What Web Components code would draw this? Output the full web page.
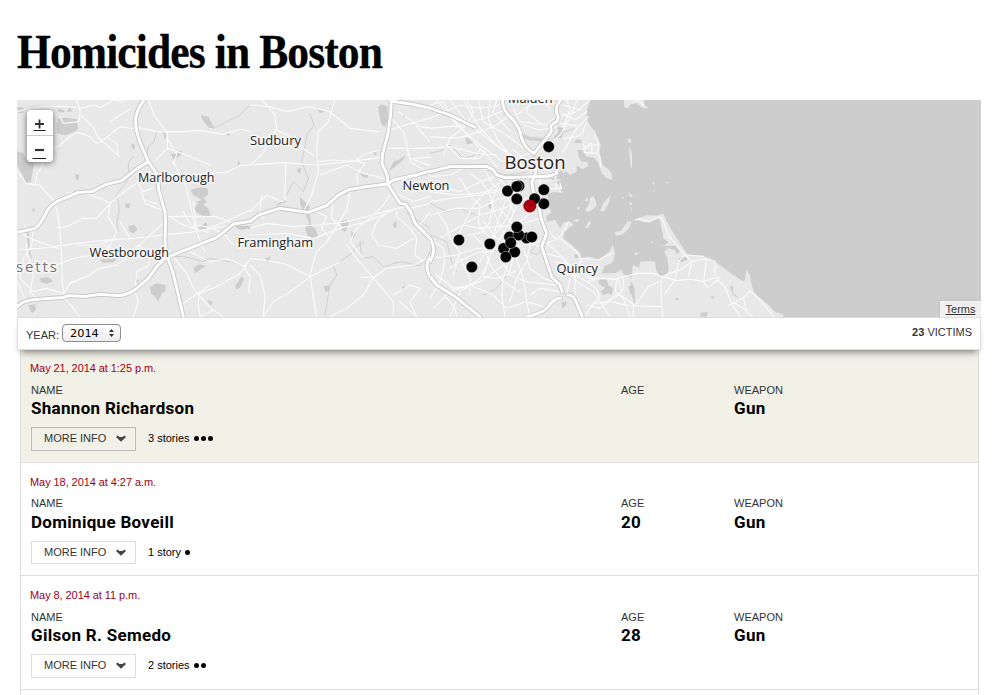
<!DOCTYPE html>
<html lang="en">
<head>
<meta charset="utf-8">
<title>Homicides in Boston</title>
<style>
body{margin:0;background:#fff;color:#333;font-family:"Liberation Sans",Arial,sans-serif;font-size:11px;overflow:hidden}
</style>
</head>
<body>
<homicide-page></homicide-page>
<script>
const define=(name,html,after)=>{
  const t=document.createElement('template');t.innerHTML=html;
  customElements.define(name,class extends HTMLElement{
    constructor(){super();this.attachShadow({mode:'open'}).append(t.content.cloneNode(true));}
    connectedCallback(){if(after)after(this.shadowRoot,this);}
  });
};

/* Map: each group is drawn in tile units, three to a pixel */
const west={water:[
 'M145,70L165,68 200,72 205,102 190,112 165,121 140,115 140,85Z','M21,168L40,175 50,195 72,205 68,230 62,262 48,264 38,240 21,212Z',
 'M542,284L572,276 592,280 595,298 580,310 592,320 580,328 596,342 602,362 588,368 560,352 550,338 566,326 556,320 574,316 562,306 550,300Z',
 'M483,176L500,176 515,164 512,182 490,194Z','M366,144L374,150 374,165 364,156Z','M355,394L372,388 382,402 372,415 358,410Z',
 'M420,575L440,565 466,570 468,585 455,596 445,620 436,605 424,598Z','M90,550L115,546 130,558 110,566 92,562Z','M270,495L300,486 320,492 310,502 280,504Z',
 'M550,518L570,508 588,513 572,523 555,535Z','M695,543L702,552 690,578 678,583 676,572Z','M196,238L208,240 204,258 197,252Z','M55,630L76,628 78,645 66,655Z',
 'M674,392L700,387 735,393 738,412 715,401 690,405Z','M565,400L590,380 592,400 570,407Z','M374,552L386,555 384,567Z','M180,35L187,48 170,52Z','M143,40L160,44 165,52 145,52Z',
 'M46,410L56,412 60,470 68,495 58,480 52,440Z','M346,326L360,324 358,340 346,337Z','M65,345L76,338 72,352Z','M590,614L608,620 602,632Z','M684,195L692,207 683,211Z','M572,60L595,66 614,100 596,98 576,72Z','M21,37L40,37 42,52 26,56Z','M648,116L662,110 656,125Z','M458,105L470,120 464,135Z'],
creek:['M370,185Q350,200 356,225T335,280T325,315L328,350 320,380 325,410','M440,110L432,140 415,155 410,185','M586,65L610,100 640,85 690,60 720,30','M480,485L520,484 580,500 600,490 660,500 700,510'],
minor:['M21,50L60,40 110,35 170,34 200,38','M200,15L210,45 208,80 160,85 150,65M213,62L250,97 265,130M213,40L250,30 270,38 310,15M300,80L360,42M310,15L335,20 350,15',
 'M180,125L205,112 240,125 260,147 290,127 330,95 375,102M180,125L150,150 110,170 100,205 80,240 75,270 50,265','M21,225L48,265 90,270 115,300 135,320',
 'M260,122L295,155 328,185M290,127L320,145 324,182','M385,98L440,110 520,110 570,106 640,118 690,102 750,115','M415,15L432,60 472,115 472,160 435,197M472,130L500,178 490,206M490,200L530,280 555,395 575,450 585,470',
 'M472,160L530,180 600,210M580,235L650,232 690,212 750,208','M384,262L330,300 300,325 295,365 320,410 300,450 285,470','M300,325L270,310 230,296 170,292M300,325L260,370 220,370 170,395 140,398',
 'M135,320L147,380 154,460 157,560 162,600','M21,465L90,460 200,445 270,437 370,430 460,420 540,412 620,398 680,390 750,390','M21,405L60,430 100,445 145,460M45,390L50,470 70,540 60,590 80,610M70,400L65,450 40,490 30,550 70,590',
 'M475,365L540,364 620,365 670,385M550,320L560,400M340,490L390,448 430,410 466,380','M280,450L340,475 380,465M162,595L180,565 230,545 270,520 320,510 350,490',
 'M383,450L415,470 420,510 380,530 375,590 385,620 370,665','M490,485L530,535 550,580 565,600 610,645 640,665M610,645L570,665 565,625 570,590',
 'M540,470L600,500 650,492 700,512 715,500 740,478M700,512L720,545 715,590 750,620','M555,600L620,575 690,535 710,510M520,625L600,570','M21,560L35,590 45,610M21,530L60,505 110,530 140,525M70,590L110,580 160,595',
 'M165,610L185,635 210,665M395,290L405,325 455,345M405,315L420,320 440,325M384,265L400,290 430,280M560,390L600,398 640,415 670,450 700,445','M480,365L510,385 550,400 595,412M520,350L540,385 555,400','M600,398L650,378 700,355 750,335','M140,510L190,490 250,480M200,450L260,450 320,430M330,380L360,430'],
major:['M402,15Q378,45 376,80C378,120 395,155 415,200L443,240 446,285 465,350 467,380 465,440 472,485 488,530 505,600 520,665','M21,412L75,400Q90,390 105,360Q115,335 140,320L205,292 245,290 290,268 335,257 375,225 413,201','M21,635Q40,615 80,613L160,607 175,602 225,604 270,598 325,602Q355,600 380,580L415,550 440,515 466,490 500,475 620,428 670,387 715,380 750,362']};
const mid={water:['M385,35L395,28 412,35 415,75 405,95 395,90 388,60Z','M142,222L152,218 152,234 142,232Z','M150,306L166,322 180,335 178,350 185,395 195,400 205,425 190,432 172,420 165,400 178,385 165,355 150,328Z','M270,380L290,374 296,385 286,410 276,405Z','M304,408L318,420 304,432Z','M222,573L238,572 238,587 225,590Z','M195,37L225,50 210,54Z','M330,234L355,240 352,250 335,244Z','M645,128L675,128 665,145 652,148Z','M468,180L455,200 430,218 416,230 430,200 445,195Z','M47,490L63,485 52,505Z','M455,575L467,572 460,588Z','M75,335L100,312 108,320Z','M368,172L380,172 378,182Z','M456,60L466,57 462,70Z','M430,385L440,377 438,400 430,395Z'],
creek:['M180,55L192,90 170,120 165,155 155,200 175,250 160,290 130,260 110,300','M330,440L335,490 370,485 400,515 450,500 510,512 530,488','M470,355L510,380 540,400 550,440 605,445 600,500 610,530','M570,500L605,525','M340,440L320,455 300,480 250,510 260,540 240,570 225,660'],
minor:['M0,30L60,35 110,50 175,35 240,50 300,100 385,110','M35,15L50,30 75,60 80,100 35,180 0,210','M255,15L235,80 205,110 200,165 205,230 185,300 160,350','M0,210L100,203 200,210 300,200 390,188M190,180L165,165 130,130 80,105','M205,200L250,195 310,200 340,180 385,165','M210,240L290,210 340,235 400,250M300,195L345,205 320,240 325,290',
'M108,203L104,310M35,300L30,350 40,370M0,350L50,300 95,320 108,310','M0,400L50,385 130,395 200,390 280,382 350,365 440,340 470,335','M0,420L110,415 190,430 270,400 350,380 430,345','M180,340L230,365 215,400 240,430 200,470 180,540 195,640 200,665','M240,425L290,345 300,290','M250,300L245,370 275,395','M340,490L300,440 320,400 365,365 400,330 420,300','M365,420L385,450 440,460 490,430M365,420L380,380 420,345M440,345L440,365 480,400 500,430 495,480 520,500',
'M370,548L320,490 290,450M370,548L340,600 290,640 240,665M370,548L430,620 430,660M370,548L410,520 490,510 530,490M333,546L370,548M430,600L480,570 510,580','M0,490L100,505 180,545 240,515 270,500','M180,545L120,590 70,620 40,665M0,510L30,540 45,600 40,665','M415,60L460,110 470,150 480,190 560,220M445,50L510,95 600,105 680,150','M420,105L500,80 580,60 640,90 700,150','M415,160L520,160 600,150 690,165','M470,150L480,200 530,230 570,280','M430,290L490,320 550,300 620,310 700,300 750,290','M480,340L540,325 620,325 700,315','M490,190L560,185 620,170 700,165M550,170L560,240 620,300 650,330','M550,340L500,400M600,320L590,375 550,400M550,390L590,430 600,470 580,530','M560,435L600,455 610,530M590,640L610,570 620,480 600,450M570,510L600,590 590,620','M640,90L650,20 620,15M560,50L590,15M500,95L540,140 600,170M680,100L700,60 670,20M510,580L480,620 500,665 450,620','M560,220L620,260 700,250 735,240M630,215L650,270 700,300'],
major:['M0,380L30,358 90,340 175,352 230,332 265,300 300,283 350,275 413,267','M424,15L422,60 413,120 398,175 396,205 413,245 413,267 450,325 467,328 482,350 495,385 545,435Q555,465 535,495Q520,530 560,570L600,605 650,635 690,665','M413,267L430,255 500,240 580,216 720,216 750,235','M422,18L490,28 550,42 610,70 675,96']};
const bay={water:['M481,10L478,24 470,49 473,79 480,92 495,109 505,134 512,150 509,170 511,190 520,214 535,222 545,238 546,254 530,249 515,235 508,214 503,200 490,187 470,186 462,175 458,166 443,165 446,185 455,200 472,202 475,213 460,222 440,212 440,230 420,240 408,228 398,236 402,220 390,226 380,248 362,250 372,262 395,272 395,294 372,290 352,297 356,325 350,330 365,350 350,362 350,380 375,375 390,400 402,382 422,380 430,390 415,400 402,415 400,430 425,450 438,462 450,472 455,490 480,485 505,495 525,480 545,465 547,448 553,480 545,505 525,512 515,535 555,535 585,520 603,500 603,10Z','M106,128L132,130 130,145 110,148Z','M175,325L187,327 186,342 176,338Z','M505,555L530,550 535,570 550,580 545,600 535,595 520,600 512,590 525,578 508,568Z','M263,112L300,126 345,130 350,140 325,138 300,136 270,125Z','M370,128L385,112 382,95 402,100 395,130Z','M432,143L440,132 458,137 450,145Z','M432,478L445,476 447,490 435,490Z','M595,575L603,570 603,600Z','M395,622L410,620 408,632 396,640Z'],
creek:['M0,325L50,350 90,340 150,365','M0,420L50,440 65,500 80,530','M260,105L300,130 350,130','M320,450L300,470 320,480 345,450','M160,600L200,580 230,540','M0,175L40,165 60,150 100,190 160,175','M345,150L380,120 432,100','M170,225L230,240 290,232'],
island:['M466,345L478,325 480,310 490,303 497,318 500,332 485,345 472,352Z','M510,348L520,325 542,300 536,325 522,348Z','M465,318L472,305 475,320Z','M465,400L475,382 480,376 482,385 474,398Z','M428,375L440,372 450,374 442,382Z','M440,340L450,335 446,345Z','M555,412L575,408 592,382 600,380V395L585,405 573,418 558,422Z'],
minor:['M0,30L40,20 60,60 120,130 180,190 200,215','M20,15L80,90 150,150 220,200','M60,15L110,80 170,130 225,170 250,190','M100,15L150,100 200,150 260,190','M145,15L160,80 230,120 280,160','M180,15L175,70 200,130 240,180M200,15L190,50 240,110','M0,125L80,130 150,110 200,90 240,60M0,100L100,90 160,70 215,50M0,70L90,30 150,40 210,30','M0,160L60,155 140,175 200,180','M50,150L90,190 150,190 165,170 150,165 130,195','M110,15L130,50 110,90 60,130 40,180','M250,40L270,80 350,90 370,70M260,60L300,30 380,25M300,15L290,55 340,90M330,15L360,40M280,90L330,105 380,95','M440,15L425,60 390,120 350,160 310,180M475,65L440,100 400,170M480,15L440,50 390,65M410,15L420,45 400,95M395,55L435,75 470,50M400,30L450,45M390,85L440,92',
'M400,130L440,125 458,115 462,100 470,85M460,145L463,172 502,175 505,140 495,120M463,155L485,152 505,148M485,145V172M462,165L480,145M502,175L510,185 512,215',
'M0,245L60,240 110,215 180,225M0,265L90,290 150,260 210,240M0,290L80,300 140,295 220,280','M0,320L60,310 150,300 200,290 230,300','M20,350L50,390 60,430 90,470 70,540','M0,360L80,340 150,340 210,310 250,320','M30,430L80,400 150,360 220,340 290,310','M90,250L120,300 150,330 145,390 190,440','M120,235L155,260 180,300 195,360 220,410','M170,235L190,270 230,300 250,350','M200,240L235,280 260,300M205,265L170,290 130,330 100,390 70,450','M220,240L190,310 180,380 160,410 115,420M240,250L225,320 200,390 180,450','M270,250L250,320 230,370 195,420 150,500','M260,330L240,380 210,430 175,490 160,550','M330,340L295,360 265,385 255,440 250,490 235,540','M0,490L80,480 140,460 200,460 260,455 330,440','M60,520L85,500 150,470 190,470','M100,390L150,400 200,395 260,390 330,370','M160,380L200,430 240,445M210,340L250,390 290,440 330,455','M130,420L160,450 180,510 220,560 270,590','M180,490L150,550 90,590 60,665','M210,490L240,540 290,560 380,570','M240,485L220,550 215,600 225,665','M255,480L280,550 290,620 300,665','M280,460L300,520 340,550 370,560','M300,450L290,500 260,550 240,620','M20,540L70,580 120,570 190,600 230,640M90,490L120,550 120,600','M0,610L30,560 45,500 40,460 0,430','M45,600L75,640 80,665M10,640L60,590 150,560 220,510','M415,380L395,420 380,432 350,445 380,470 410,500 440,540 470,560 505,550 540,550M390,430L420,455 440,470 455,500 430,520M455,490L505,495 545,475M350,400L365,420 380,432','M350,475L400,490 440,560 490,590 540,665','M370,500L430,510 480,550 505,550','M435,540V600M470,560L500,580 510,610 490,625 465,665M560,555L555,590 580,610 600,665M540,550L565,555 575,590 560,600M490,625L540,620 600,632','M420,550L410,600M470,630L510,640 560,600','M325,240L330,270 345,290 350,270M310,260L390,255M320,285L395,280 390,265M375,240L380,280','M260,190L320,200 370,190M240,205L280,180 330,170','M250,165L290,200 310,230','M160,545L200,550 255,530M300,600L330,580 390,590M230,640L290,620 340,635'],
major:['M0,230L60,215 170,214 190,225 200,240 225,248 360,243','M217,15Q218,45 240,65Q268,90 275,130Q285,160 312,175L345,135 362,112','M392,15Q370,40 385,65L382,78 362,92 364,108','M312,190L318,215 315,242 305,262 310,290 325,320 333,370 350,415 335,455 350,500 365,545 390,570 397,590','M0,545L20,570 75,605 150,665','M290,665Q340,655 355,635Q370,610 392,609','M413,600Q430,598 440,625L457,665','M0,40L60,60 135,97','M0,430Q18,460 5,490L0,500','M360,243L380,235 375,205']};
const coast={water:['M87,10H1143V670H553L548,658 525,650 500,625 480,608 462,590 455,570 450,542 440,523 433,560 415,550 400,540 380,525 350,503 325,488 295,482 262,478 238,442 215,405 198,375 190,356 170,362 140,361 105,373 130,382 150,382 178,370 185,400 190,430 205,442 195,450 183,453 228,452 240,470 228,478 225,465 205,460 192,470 202,488 206,525 195,545 180,545 168,525 165,500 145,498 120,500 118,518 100,510 95,520 87,520Z','M90,555L104,580 105,630 95,600Z','M300,655L323,650 320,665H302Z','M60,655L82,652 78,665H62Z','M330,606L342,603 340,612Z','M224,608L237,610 233,617Z','M390,570L400,575 398,595 420,610 398,600Z','M235,490L260,485 262,495 240,502Z'],
island:['M72,10L130,10 135,32 147,38 130,40 105,22 88,30 86,40 73,38Z','M82,378L95,380 88,398 68,418Z','M85,289L100,305 90,306Z','M87,322L97,325 92,333Z','M158,265L164,260 161,270Z','M195,261L208,262 202,265Z','M150,438L160,441 156,446Z','M103,475L117,472 108,482Z','M160,290L165,283 162,295Z'],
creek:[],minor:['M85,15L100,25 115,15 130,30','M105,375L120,372 145,380 175,365 187,372 205,420 228,450 255,480','M0,550L45,553 110,535 160,535 187,545','M187,545L245,522 275,500 315,492 345,498 345,540 360,550','M255,480L275,500 265,545M255,480L235,500 225,555M255,480L310,484 318,493 312,555','M187,545L230,557 270,552 310,560 345,548 375,575 395,625 420,665M310,560L322,578 360,550','M187,545L183,570 185,630 188,665M225,555L195,595M180,558L145,575 105,632 185,635M105,632L10,632','M0,610L55,595 110,635M50,553L60,600 75,630M70,553L72,580 55,600 10,625M0,640L20,665','M385,632L430,608 450,588 480,615 522,665M398,622L430,640 458,665M430,608L440,650','M100,632V665M60,600L60,665'],major:[]};
/* The coast between the two eastern tiles */
bay.water.push('M603,10L692,10 692,520 650,520 645,530 603,546 580,538 575,525 603,490Z','M603,560L625,575 620,590 603,600Z');
bay.island.push('M592,130L602,133 604,142 597,145Z','M597,150L610,190 610,218 602,215Z','M602,215L625,222 637,237 638,253 622,247Z','M607,330L615,315 634,297 622,325 602,350Z','M555,415L573,408 592,380 605,378 598,398 578,418 558,422Z','M535,480L548,450 555,475 550,498 527,505Z','M575,306L583,308 578,312Z','M582,14L640,10 640,22 615,22 600,30 596,40 583,38Z','M595,290L610,305 600,306Z','M597,322L607,325 602,333Z');
bay.minor.push('M505,550L555,553 620,535 640,535','M565,595L615,632 640,635','M610,632V665M580,553L582,580 565,600 520,625');
const sheet=(g,x)=>`<g transform="translate(${x} 95) scale(.33333)"><g fill="#cdcdcd">${g.water.map(d=>`<path d="${d}"/>`).join('')}</g><g fill="#e8e8e8">${(g.island||[]).map(d=>`<path d="${d}"/>`).join('')}</g><path class="creek" d="${g.creek.join('')}"/><path class="minor" d="${g.minor.join('')}"/></g>`;
const roads=(g,x,kind)=>`<g transform="translate(${x} 95) scale(.33333)"><path class="${kind}" d="${g.major.join('')}"/></g>`;
const tiles=[[west,10,17,233],[mid,250,250,180],[bay,430,430,202],[coast,600,632,349]];
const dots=[[548.7,146.7],[519,186],[507.5,191],[516.8,186.5],[516.8,199],[543.8,189.7],[543.8,203.8],[534.6,198.8],[526.5,238],[509.5,237],[518.7,235],[516.8,227],[531.8,237],[503.6,248.5],[514.7,252],[510.7,242.8],[505.8,257],[489.8,243.9],[458.9,240],[471.8,267]];
const labels=[['Marlborough',138,181.5,76.5],['Sudbury',250,144.5,51],['Newton',402.5,190,47],['Framingham',237.5,247,75.5],['Westborough',89.5,256.5,79.5],['Quincy',556.5,273,41.5],['Malden',508,103.4,44.5]];
define('city-map',`<style>
:host{display:block;height:217px;position:relative;overflow:hidden;background:#e8e8e8}
svg.map{display:block}
.creek,.minor,.edge,.major{fill:none;stroke-linejoin:round;stroke-linecap:round}
.creek{stroke:#d0d0d0;stroke-width:3}.minor{stroke:#f9f9f9;stroke-width:3.6}
.edge{stroke:#c8c8c8;stroke-width:14}.major{stroke:#fff;stroke-width:8.5}
text{font-family:"Open Sans","Noto Sans",sans-serif;font-weight:500;fill:#222}
.halo{stroke:#f5f5f5;stroke-width:3.5;stroke-linejoin:round;paint-order:stroke}
.zoom{position:absolute;left:10px;top:10px;width:26px;height:52px;background:#fff;border-radius:4px;box-shadow:0 1px 6px rgba(0,0,0,.55);display:flex;flex-direction:column}
.zoom span{flex:1;display:flex;justify-content:center;padding-top:6px}
.zoom span+span{border-top:1px solid #ccc;padding-top:7px}
.zoom svg{margin-right:2px}
.terms{position:absolute;right:0;bottom:0;width:41px;height:16px;font-size:11px;line-height:16px;text-align:center;background:#f0f0f0;box-shadow:0 0 3px #bbb;text-decoration:underline}
</style>
<svg class="map" width="964" height="217" viewBox="17 100 964 217"><defs>${tiles.map((t,i)=>`<clipPath id="c${i}"><rect x="${t[2]}" y="100" width="${t[3]+.3}" height="217"/></clipPath>`).join('')}</defs>
${tiles.map((t,i)=>`<g clip-path="url(#c${i})">${sheet(t[0],t[1])}${roads(t[0],t[1],'edge')}${roads(t[0],t[1],'major')}</g>`).join('')}
${labels.map(l=>`<text class="halo" x="${l[1]}" y="${l[2]}" font-size="13.500" textLength="${l[3]}" lengthAdjust="spacingAndGlyphs">${l[0]}</text>`).join('')}
<text class="halo" x="504.5" y="168.500" font-size="18.500" textLength="61" lengthAdjust="spacingAndGlyphs">Boston</text><text class="halo" x="16" y="271.500" font-size="15" textLength="41" style="fill:#777">setts</text>
${dots.map(d=>`<circle cx="${d[0]}" cy="${d[1]}" r="5.7" stroke="#fff" stroke-opacity=".65" stroke-width=".6"/>`).join('')}<circle cx="529.8" cy="206" r="6.5" fill="#a8000f"/></svg>
<div class="zoom"><span><svg width="14" height="16"><path d="M3 8h9M7.500 3.500v9" stroke="#333" stroke-width="1.800"/><path d="M1.500 14.500h12" stroke="#222"/></svg></span><span><svg width="14" height="16"><path d="M3 7h9" stroke="#333" stroke-width="2.200"/><path d="M0.500 15.500h14" stroke="#222"/></svg></span></div><div class="terms">Terms</div>`);

define('filter-bar',`<style>
:host{display:flex;justify-content:space-between;box-sizing:border-box;height:33px;border:1px solid #ddd;background:#fff;padding:0 8px;position:relative;box-shadow:0 6px 7px -4px rgba(0,0,0,.5);color:#333}
.year{display:flex;align-items:flex-start;gap:3px}.year label{padding-top:11px}
.select{display:flex;align-items:center;justify-content:space-between;box-sizing:border-box;width:59px;height:18px;margin-top:6px;padding:0 6px 0 7px;border:1px solid #8e8e8e;border-radius:4px;background:linear-gradient(#fff,#ececec);font:11.3px "DejaVu Sans",sans-serif;color:#000}
.count{padding-top:8px}
</style><div class="year"><label>YEAR:</label><div class="select"><span>2014</span><svg width="5" height="8"><path d="M0 3L2.500 0 5 3ZM0 5H5L2.500 8Z" fill="#333"/></svg></div></div><div class="count"><slot></slot></div>`);

define('victim-row',`<style>
:host{display:block;box-sizing:border-box;height:113px;border-bottom:1px solid #ddd;padding:13px 9px 0;background:#fff}
:host([active]){background:#f1f1e7;padding-top:12px;--edge:#bbb}
:host([tall]){height:114px}
.date{color:#a00020;height:22px;line-height:13px;letter-spacing:-.07px}
:host([snug]) .date{height:21px}
:host([snug]) .value{padding-top:1px}
:host([snug]) .facts{height:44px}
:host([snug]) .button{height:23px}
:host([snug]) .more{line-height:20px}
.facts{display:grid;grid-template-columns:590px 113px 1fr;padding-left:1px;height:43px}
.label{line-height:13px}
.value{font:bold 17px/22px Roboto,sans-serif;letter-spacing:.3px;color:#000;white-space:nowrap}
.more{display:flex;align-items:flex-start;gap:12px;padding-left:1px;color:#000;line-height:21px}
.button{box-sizing:border-box;width:105px;height:24px;border:1px solid var(--edge,#ddd);display:flex;align-items:flex-start;justify-content:space-between;padding:0 9px 0 12px;color:#333}
.button svg{margin-top:7px}
.info{padding-top:1px}
.dots{display:inline-flex;gap:2px;margin-left:4px;vertical-align:1px}.dots i{width:5px;height:5px;border-radius:50%;background:#000}
</style><div class="date"></div><div class="facts"><div><div class="label">NAME</div><div class="value name"></div></div><div><div class="label">AGE</div><div class="value age"></div></div><div><div class="label">WEAPON</div><div class="value">Gun</div></div></div>
<div class="more"><div class="button">MORE INFO<svg width="10" height="7"><path d="M0 2L1.500 .5 3.500 2H6.500L8.500 .5 10 2 5 6.800Z" fill="#444"/></svg></div><div class="info"><span class="stories"></span><span class="dots"></span></div></div>`,(r,h)=>{
 const n=+h.getAttribute('stories');
 r.querySelector('.date').textContent=h.getAttribute('date');
 r.querySelector('.name').textContent=h.getAttribute('name');
 r.querySelector('.age').textContent=h.getAttribute('age')||'';
 r.querySelector('.stories').textContent=n+(n>1?' stories':' story');
 r.querySelector('.dots').innerHTML='<i></i>'.repeat(n);
});

define('homicide-page',`<style>
:host{display:flex;flex-direction:column;height:695px;overflow:hidden;box-sizing:border-box;padding:0 15px 0 17px}
h1{margin:0;height:100px;box-sizing:border-box;padding-top:24px;font:bold 48px/55px "Liberation Serif",serif;color:#000;white-space:nowrap}
h1 span{display:inline-block;transform:scaleX(.907);transform-origin:0 0;letter-spacing:-1px;-webkit-text-stroke:.3px #000}
.list{flex:1;margin:0 2px 0 3px;border:1px solid #ddd;border-width:0 1px}
</style><h1><span>Homicides in Boston</span></h1><city-map></city-map><filter-bar><b>23</b> VICTIMS</filter-bar>
<div class="list"><victim-row active date="May 21, 2014 at 1:25 p.m." name="Shannon Richardson" stories="3"></victim-row><victim-row snug date="May 18, 2014 at 4:27 a.m." name="Dominique Boveill" age="20" stories="1"></victim-row><victim-row tall date="May 8, 2014 at 11 p.m." name="Gilson R. Semedo" age="28" stories="2"></victim-row></div>`);
</script>
</body>
</html>
